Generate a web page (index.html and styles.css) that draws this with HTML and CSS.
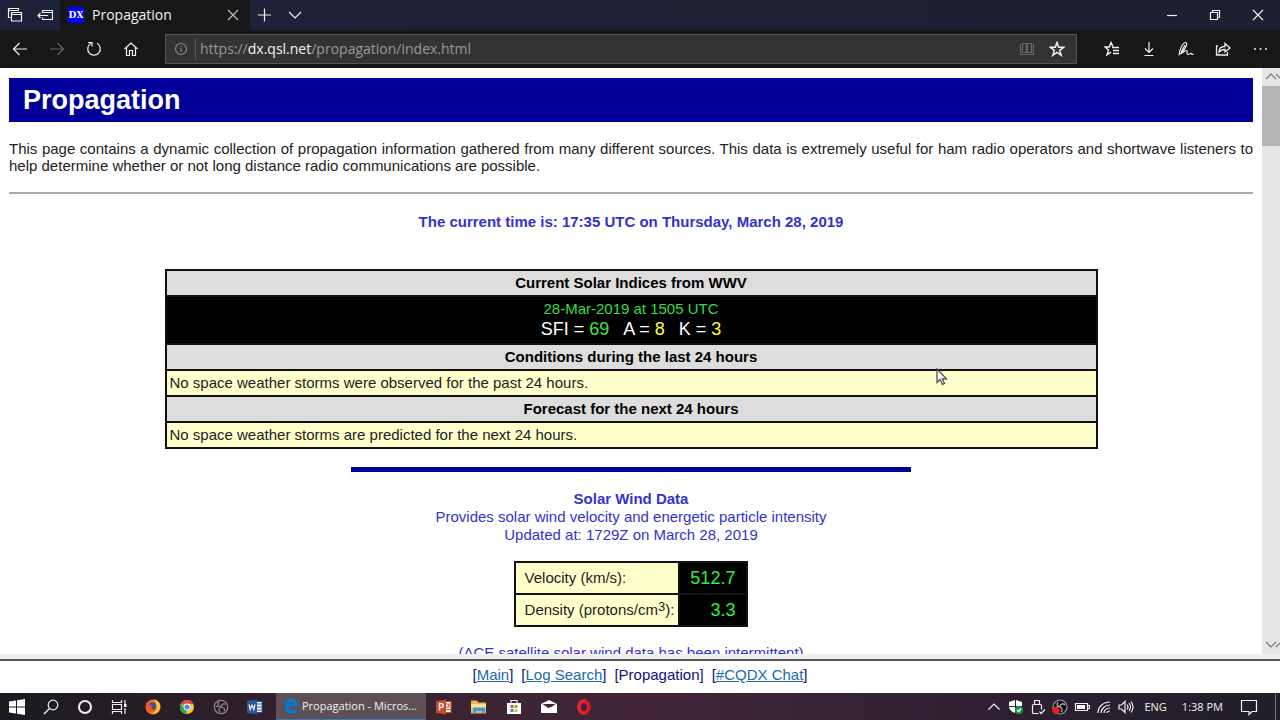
FILE: index.html
```html
<!DOCTYPE html>
<html lang="en">
<head>
<meta charset="utf-8">
<title>Propagation</title>
<link rel="stylesheet" href="styles.css">
</head>
<body>
<header class="titlebar">
  <button class="tab-tool" aria-label="Tabs you've set aside"><svg width="16" height="16" viewBox="0 0 16 16"><path d="M3.500 10.500h-2v-9h10v2M1.500 3.500h10M4.500 5.500h10v8.500h-10zM4.500 7.500h10"/></svg></button>
  <button class="tab-tool" aria-label="Set these tabs aside"><svg width="16" height="16" viewBox="0 0 16 16"><path d="M5.500 6v-2.500h10v9h-10V10.500M5.500 5.500h10M11 8.500H1M3.500 6L1 8.500 3.500 11"/></svg></button>
  <div class="tab">
    <span class="favicon">DX</span>
    <span class="tab-title">Propagation</span>
    <button class="tab-close" aria-label="Close tab"><svg width="12" height="12" viewBox="0 0 12 12"><path d="M1 1l10 10M11 1L1 11"/></svg></button>
  </div>
  <button class="tab-tool" aria-label="New tab"><svg width="14" height="14" viewBox="0 0 14 14"><path d="M6.500 .5v13M0 7h13"/></svg></button>
  <button class="tab-tool" aria-label="Tab previews"><svg width="14" height="14" viewBox="0 0 14 14"><path d="M1 4l6 6 6-6"/></svg></button>
  <div class="window-buttons">
    <button aria-label="Minimize"><svg width="12" height="12" viewBox="0 0 12 12"><path d="M1 6.500h10"/></svg></button>
    <button aria-label="Restore"><svg width="12" height="12" viewBox="0 0 12 12"><path d="M1.500 3.500h7v7h-7zM3.500 3.500v-2h7v7h-2"/></svg></button>
    <button aria-label="Close"><svg width="12" height="12" viewBox="0 0 12 12"><path d="M1 1l10 10M11 1L1 11"/></svg></button>
  </div>
</header>

<nav class="toolbar" aria-label="Browser">
  <div class="tools">
    <button aria-label="Back"><svg width="16" height="16" viewBox="0 0 16 16"><path d="M15 8H1.500M7.500 2l-6 6 6 6"/></svg></button>
    <button class="dim" aria-label="Forward"><svg width="16" height="16" viewBox="0 0 16 16"><path d="M1 8h13.500M8.500 2l6 6-6 6"/></svg></button>
    <button aria-label="Refresh"><svg width="16" height="16" viewBox="0 0 16 16"><path d="M11 2.300A6.300 6.300 0 1 1 5 2.300M2 1.500h4v4"/></svg></button>
    <button aria-label="Home"><svg width="16" height="16" viewBox="0 0 16 16"><path d="M1.500 8L8 2l6.500 6M3.500 6.500v8h3v-5h3v5h3v-8"/></svg></button>
  </div>
  <div class="address">
    <button class="site-info" aria-label="Site information"><svg width="14" height="14" viewBox="0 0 14 14"><circle cx="7" cy="7" r="5.500"/><path d="M7 6v4M7 4v1"/></svg></button>
    <a class="url" href="#top">https://<b>dx.qsl.net</b>/propagation/index.html</a>
    <button class="reading" aria-label="Reading view"><svg width="16" height="16" viewBox="0 0 16 16"><path d="M1.500 3v10.500h13V3M3.500 2.500h4v9h-4zM8.500 2.500h4v9h-4z"/></svg></button>
    <button aria-label="Add to favorites"><svg width="16" height="16" viewBox="0 0 16 16"><path d="M8 1.500l1.700 4.700 5 .1-4 3.100 1.500 4.900L8 11.400l-4.200 2.900 1.500-4.900-4-3.100 5-.1z" stroke-width="1.500"/></svg></button>
  </div>
  <div class="tools">
    <button aria-label="Favorites"><svg width="16" height="16" viewBox="0 0 16 16"><path d="M9 5.500L7 1.500 5.300 6H1l3.500 3L3 13.800l4-2.600M8 6.500h7M9 9.500h6M9 12.500h6" stroke-width="1.400"/></svg></button>
    <button aria-label="Downloads"><svg width="16" height="16" viewBox="0 0 16 16"><path d="M8 1v10M4 7.500l4 4 4-4M3.500 14.500h9"/></svg></button>
    <button aria-label="Add notes"><svg width="16" height="16" viewBox="0 0 16 16"><path d="M1 14.500C1 9 5 1.500 7.500 1.500c2.500 0 1 6-4.500 10L7 4M1.500 12.500c3 .5 5-3 7-3 1.500 0-.5 4 1.500 4s2-2 3-1 1 1 2.500 1"/></svg></button>
    <button aria-label="Share"><svg width="16" height="16" viewBox="0 0 16 16"><path d="M3 5H1.500v9h11v-3M4 11c0-4 2-5.500 6-5.500V2.500L15 7l-5 4V8.500C7 8.500 5.500 9 4 11z" stroke-width="1.300"/></svg></button>
    <button aria-label="More"><svg width="16" height="16" viewBox="0 0 16 16"><g fill="currentColor" stroke="none"><circle cx="3" cy="8" r="1"/><circle cx="8.500" cy="8" r="1"/><circle cx="14" cy="8" r="1"/></g></svg></button>
  </div>
</nav>

<div class="viewport">
  <main class="page" id="top">
    <h1>Propagation</h1>
    <p class="intro">This page contains a dynamic collection of propagation information gathered from many different sources. This data is extremely useful for ham radio operators and shortwave listeners to help determine whether or not long distance radio communications are possible.</p>
    <hr class="rule">
    <p class="clock">The current time is: 17:35 UTC on Thursday, March 28, 2019</p>
    <table class="indices">
      <tr><th>Current Solar Indices from WWV</th></tr>
      <tr><td class="readout"><div class="stamp">28-Mar-2019 at 1505 UTC</div><div class="figures"><span>SFI = <b class="green">69</b></span><span>A = <b>8</b></span><span>K = <b>3</b></span></div></td></tr>
      <tr><th>Conditions during the last 24 hours</th></tr>
      <tr><td>No space weather storms were observed for the past 24 hours.</td></tr>
      <tr><th>Forecast for the next 24 hours</th></tr>
      <tr><td>No space weather storms are predicted for the next 24 hours.</td></tr>
    </table>
    <hr class="divider">
    <section class="wind">
      <h2>Solar Wind Data</h2>
      <p>Provides solar wind velocity and energetic particle intensity</p>
      <p>Updated at: 1729Z on March 28, 2019</p>
      <table class="readings">
        <tr><th scope="row">Velocity (km/s):</th><td>512.7</td></tr>
        <tr><th scope="row">Density (protons/cm<sup>3</sup>):</th><td>3.3</td></tr>
      </table>
      <p>(ACE satellite solar wind data has been intermittent)</p>
    </section>
  </main>
  <div class="scrollbar">
    <svg width="18" height="18" viewBox="0 0 18 18"><path d="M4 11l5-5 5 5M14 6l4 4"/></svg>
    <div class="thumb"></div>
    <svg width="18" height="18" viewBox="0 0 18 18"><path d="M4 6l5 5 5-5M14 11l4-4"/></svg>
  </div>
</div>

<nav class="site-nav" aria-label="Site">
  <span>[<a href="#main">Main</a>]</span>
  <span>[<a href="#log">Log Search</a>]</span>
  <span>[Propagation]</span>
  <span>[<a href="#chat">#CQDX Chat</a>]</span>
</nav>

<footer class="taskbar">
  <div class="launchers">
    <button aria-label="Start"><svg width="16" height="16" viewBox="0 0 16 16"><path fill="#fff" stroke="none" d="M0 2.500l7-1v6H0zM8 1.300L16 0v7.500H8zM0 8.500h7v6l-7-1zM8 8.500h8V16l-8-1.300z"/></svg></button>
    <button aria-label="Search"><svg width="16" height="16" viewBox="0 0 16 16"><circle cx="10" cy="6" r="4.800"/><path d="M6.500 9.500L1 15" stroke-width="1.400"/></svg></button>
    <button aria-label="Cortana"><svg width="16" height="16" viewBox="0 0 16 16"><circle cx="8" cy="8" r="6" stroke-width="2"/></svg></button>
    <button aria-label="Task view"><svg width="16" height="16" viewBox="0 0 16 16"><path d="M1.500 1v2.500h9V1M1.500 5.500h9v5h-9zM1.500 15v-2.500h9V15M14 1v4M14 9v6"/><path d="M13 5h2.500v3H13z" fill="#fff" stroke="none"/></svg></button>
    <button aria-label="Firefox"><svg width="16" height="16" viewBox="0 0 16 16" stroke="none"><circle cx="8" cy="8" r="7.500" fill="#f26b28"/><path d="M9 .6c6 1 8 7 5 11-2 3-6 4-9 3 6 0 9-7 4-14z" fill="#ffc933"/><circle cx="7.500" cy="7" r="3.800" fill="#3451a4"/><path d="M1 4c2 0 3 1 4 2l3 1-2 2c1 2 4 2 6 0-1 4-8 5-10 1z" fill="#f5542a"/></svg></button>
    <button aria-label="Chrome"><svg width="16" height="16" viewBox="0 0 16 16" stroke="none"><circle cx="8" cy="8" r="7" fill="#f2c632"/><path d="M8 8L2 4.400A7 7 0 0 1 14.400 5H8z" fill="#dc4c3d"/><path d="M2 4.400L6 10l2 1-1 3.900A7 7 0 0 1 2 4.400z" fill="#36a158"/><circle cx="8" cy="8" r="3.400" fill="#fff"/><circle cx="8" cy="8" r="2.600" fill="#4a8be8"/></svg></button>
    <button class="muted" aria-label="OBS Studio"><svg width="16" height="16" viewBox="0 0 16 16"><circle cx="8" cy="8" r="6.700"/><path d="M6 3c-2 2-1 4 2 5 0-2 2-4 4.500-2.500M8 8c-2 1-3 3-1 5M8 8c2 0 4 1 3.500 4M3 8c1-1 3-1 5 0"/></svg></button>
    <button aria-label="Word"><svg width="16" height="16" viewBox="0 0 16 16"><path fill="#fff" stroke="#2b579a" d="M8 2.500h7v11H8z"/><path d="M9 5h5M9 8h5M9 11h5" stroke="#2b579a" stroke-width="1"/><path fill="#2b579a" stroke="none" d="M0 2l10-1.500v15L0 14z"/><path d="M2 5.500l1.200 5L5 6l1.800 4.500L8 5.500"/></svg></button>
  </div>
  <button class="running"><svg width="16" height="16" viewBox="0 0 16 16"><path fill="#0878d4" stroke="none" d="M1 7C2 2.500 5 .5 8.500.5c4.500 0 6.500 3.500 6.500 8H5.500c.2 4 5 4.500 8.500 2.500v3.300C8.500 17 2 15 2 9.500 2 7 3.500 5.300 5.500 4.400 3.500 4.600 2 5.500 1 7zm4.600-.8h5.200C10.700 2.800 6 2.800 5.600 6.200z"/></svg><span>Propagation - Micros...</span></button>
  <div class="apps">
    <button aria-label="PowerPoint"><svg width="16" height="16" viewBox="0 0 16 16"><path fill="#fff" stroke="#c9472b" d="M8 2.500h7v11H8z"/><path d="M10 5h3v3h-3M10 10.500h4" stroke="#c9472b"/><path fill="#c9472b" stroke="none" d="M0 2l10-1.500v15L0 14z"/><path d="M3.500 11.500v-7H5c3 0 3 4 0 4H3.500" stroke-width="1.500"/></svg></button>
    <button aria-label="File Explorer"><svg width="16" height="16" viewBox="0 0 16 16" stroke="none"><path fill="#e9b84b" d="M0 1.500h6l1.500 2H15v11H0z"/><path fill="#ffe08a" d="M0 5h15v4H0z"/><path fill="#3f9bdc" d="M2 8.500h12v6h-3V12H5v2.500H2z"/></svg></button>
    <button aria-label="Microsoft Store"><svg width="16" height="16" viewBox="0 0 16 16"><path d="M5 4.500V1.500h6v3"/><path fill="#fff" stroke="none" d="M1 4h14v11H1z"/><path fill="#e94f32" stroke="none" d="M4.500 6h3v3h-3z"/><path fill="#71b52d" stroke="none" d="M8.500 6h3v3h-3z"/><path fill="#1992dd" stroke="none" d="M4.500 10h3v3h-3z"/><path fill="#f4b716" stroke="none" d="M8.500 10h3v3h-3z"/></svg></button>
    <button aria-label="Mail"><svg width="16" height="16" viewBox="0 0 16 16"><path fill="#fff" stroke="none" d="M0 5l8-4 8 4v9H0z"/><path fill="#39242f" stroke="none" d="M1.500 5h13L10 8.200 8.500 8 8 9.500z"/></svg></button>
    <button aria-label="Opera"><svg width="16" height="16" viewBox="0 0 16 16"><ellipse cx="8" cy="8" rx="5" ry="6" stroke="#df2330" stroke-width="4"/><path d="M10 1.500c6 3 5 10 0 13" stroke="#aa1726" stroke-width="1.500"/></svg></button>
  </div>
  <div class="tray">
    <button aria-label="Show hidden icons"><svg width="16" height="16" viewBox="0 0 16 16"><path d="M2.500 10.500L8 5l5.500 5.500"/></svg></button>
    <button aria-label="Windows Security"><svg width="16" height="16" viewBox="0 0 16 16" stroke="none"><path fill="#fff" d="M7 1L1 3v4h6zM8 1l6 2v4H8zM1 8h6v6C4 13 1.500 11 1 8zM8 8h6c-.5 3-3 5-6 6z"/><circle cx="11" cy="11" r="4" fill="#159b48"/><path d="M9 11l1.500 1.500L13 9.500" stroke="#fff"/></svg></button>
    <button aria-label="Safely remove hardware"><svg width="16" height="16" viewBox="0 0 16 16"><path d="M4.500 5.500v-4h5v4M2.500 14.500v-8q0-1 1-1h7q1 0 1 1v4M2.500 14.500h6M9.500 12.500l1.500 2 4-4"/></svg></button>
    <button aria-label="OBS recording"><svg width="16" height="16" viewBox="0 0 16 16"><circle cx="8" cy="8" r="7" fill="#151013" stroke="#a09aa0"/><path d="M6 3c-2 3 0 4 2 5 0-3 3-4 5-2M8 8c2 1 3 3 1 5M8 8c-2-1-4 0-5 1" stroke="#b8b2b8"/><circle cx="4" cy="11.500" r="3.500" fill="#ed1c24" stroke="none"/></svg></button>
    <button aria-label="Battery"><svg width="16" height="16" viewBox="0 0 16 16"><path d="M1.500 4.500h12v7h-12zM14 6.500h1.500v3H14"/><path fill="#fff" stroke="none" d="M3 6h8v4H3z"/></svg></button>
    <button aria-label="Network"><svg width="16" height="16" viewBox="0 0 16 16"><path d="M2 14C2 8 7 3 14 3M5 14c0-4 4-8 9-8M8 14c0-3 3-5 6-5M11 14c0-1 1-2 3-2"/></svg></button>
    <button aria-label="Volume"><svg width="16" height="16" viewBox="0 0 16 16"><path d="M1 6h2.500L7 2.500v11L3.500 10H1zM9 5.500q2 2.500 0 5M11 4q3 4 0 8M13 2.500q4 5.500 0 11"/></svg></button>
    <span class="lang">ENG</span>
    <time class="time">1:38 PM</time>
    <button class="notice" aria-label="Notifications"><svg width="18" height="18" viewBox="0 0 18 18"><path d="M1.500 2.500h15v11H12l-3 3v-3H1.500z"/></svg></button>
  </div>
</footer>

<svg class="pointer" width="12" height="18" viewBox="0 0 12 18"><path d="M1 1v13.500l3-3 2.500 5 2-1-2.300-4.700h4.300z"/></svg>
</body>
</html>
```
FILE: styles.css
```css
* { box-sizing: border-box; }
body {
  margin: 0;
  height: 100vh;
  display: flex;
  flex-direction: column;
  overflow: hidden;
  background: #fff;
  color: #222;
  font: 15px/18px "Liberation Sans", Arial, sans-serif;
}
button {
  display: flex;
  align-items: center;
  justify-content: center;
  padding: 0;
  border: 0;
  background: none;
  color: inherit;
  font: inherit;
}
svg { flex: none; fill: none; stroke: currentColor; stroke-width: 1.2; }
svg[stroke="none"] { stroke: none; }

.titlebar, .toolbar, .taskbar {
  flex: none;
  display: flex;
  align-items: stretch;
  color: #f0f0f0;
  font-family: "Open Sans", "Noto Sans", sans-serif;
}
.titlebar { height: 30px; background: linear-gradient(90deg, #1c2239, #1c2030); }
.tab-tool { width: 30px; }
.tab {
  width: 190px;
  padding: 0 10px 0 8px;
  display: flex;
  align-items: center;
  gap: 8px;
  background: #171717;
}
.favicon {
  width: 16px;
  background: #00f;
  color: #fff;
  font: bold 9px/16px "DejaVu Serif", serif;
  text-align: center;
}
.tab-title { flex: 1; font-size: 14px; line-height: 20px; }
.tab-close { width: 14px; color: #bbb; }
.window-buttons { margin-left: auto; padding-right: 1px; display: flex; }
.window-buttons button { width: 43px; }

.toolbar { height: 38px; padding: 0 2px 0 1px; background: #171717; align-items: center; }
.tools { display: flex; }
.tools button { width: 37px; height: 38px; }
.tools .dim { color: #666; }
.address {
  flex: 1;
  height: 30px;
  margin: 0 16px;
  display: flex;
  align-items: center;
  border: 1px solid #555;
  background: #333;
}
.address button { width: 30px; }
.address .site-info { height: 22px; color: #888; border-right: 1px solid #555; }
.address .reading { color: #666; }
.url { flex: 1; padding-left: 4px; color: #999; font-size: 14px; line-height: 20px; text-decoration: none; }
.url b { color: #f4f4f4; font-weight: normal; }
.address button:last-child { margin-right: 4px; }

.viewport {
  flex: 1;
  min-height: 0;
  display: flex;
  overflow: hidden;
}
.page { flex: 1; padding: 10px 9px 0; }
.page h1 {
  margin: 0 0 18px;
  padding: 0 14px;
  background: #009;
  color: #fff;
  font-size: 27px;
  line-height: 44px;
}
.page p { margin: 0; }
.page .intro { line-height: 17px; text-align: justify; }
.rule { height: 2px; margin: 18px 0 19px; border: 0; background: #aaa; }
.page .clock { margin-bottom: 38px; color: #33c; font-weight: bold; text-align: center; }
.indices, .readings { margin: 0 auto; border-collapse: collapse; }
.indices { width: 75%; }
.indices th, .indices td, .readings th, .readings td { border: 2px solid #111; }
.indices th { padding: 3px; background: #ddd; color: #000; }
.indices td { padding: 3px; background: #ffc; }
.indices .readout { background: #000; color: #fff; text-align: center; }
.stamp, .green { color: #3d4; }
.figures { display: flex; justify-content: center; gap: 14px; font-size: 18px; line-height: 22px; }
.figures b { color: #ff3; font-weight: normal; }
.figures .green { color: #3e4; }
.divider { width: 45%; height: 5px; margin: 18px auto; border: 0; background: #009; }
.wind { color: #33c; text-align: center; }
.wind h2 { margin: 0; font-size: 15px; line-height: 18px; }
.readings { margin: 17px auto; color: #222; }
.readings th { padding: 6px 4px 6px 9px; background: #ffc; font-weight: normal; text-align: left; }
.readings td { padding: 4px 11px 4px 10px; background: #000; color: #3e4; font-size: 18px; text-align: right; }
.readings sup { font-size: 13px; line-height: 0; vertical-align: 4px; }

.scrollbar {
  width: 18px;
  display: flex;
  flex-direction: column;
  background: #e6e6e6;
  color: #777;
}
.thumb { height: 60px; margin-bottom: auto; background: #b5b5b5; }

.site-nav {
  flex: none;
  padding: 5px 0 9px;
  display: flex;
  justify-content: center;
  gap: 8px;
  border-top: 2px solid #555;
  box-shadow: 0 -5px 0 #f0f0f0;
  margin-top: 5px;
  color: #117;
}
.site-nav a { color: #2468ac; }

.taskbar {
  height: 27px;
  background: linear-gradient(90deg, #1b1a20, #34222e 25%, #422638 50%, #2c2030 80%, #201f28);
  font-size: 11px;
}
.launchers, .apps, .tray { display: flex; }
.launchers { padding-right: 4px; }
.launchers button { width: 34px; }
.launchers .muted { color: #8c888c; }
.running {
  width: 150px;
  justify-content: flex-start;
  gap: 3px;
  padding-left: 7px;
  background: #5e5057;
  border-bottom: 1px solid #3b79b7;
  white-space: nowrap;
}
.apps button { width: 35px; }
.tray { margin-left: auto; padding-right: 4px; align-items: center; }
.tray button { width: 22px; height: 27px; }
.lang { margin-left: 7px; }
.time { margin-left: 15px; }
.tray .notice { width: 53px; border-right: 1px solid #777; }

.pointer { position: absolute; left: 936px; top: 368px; fill: #fff; stroke: #444; }
```
